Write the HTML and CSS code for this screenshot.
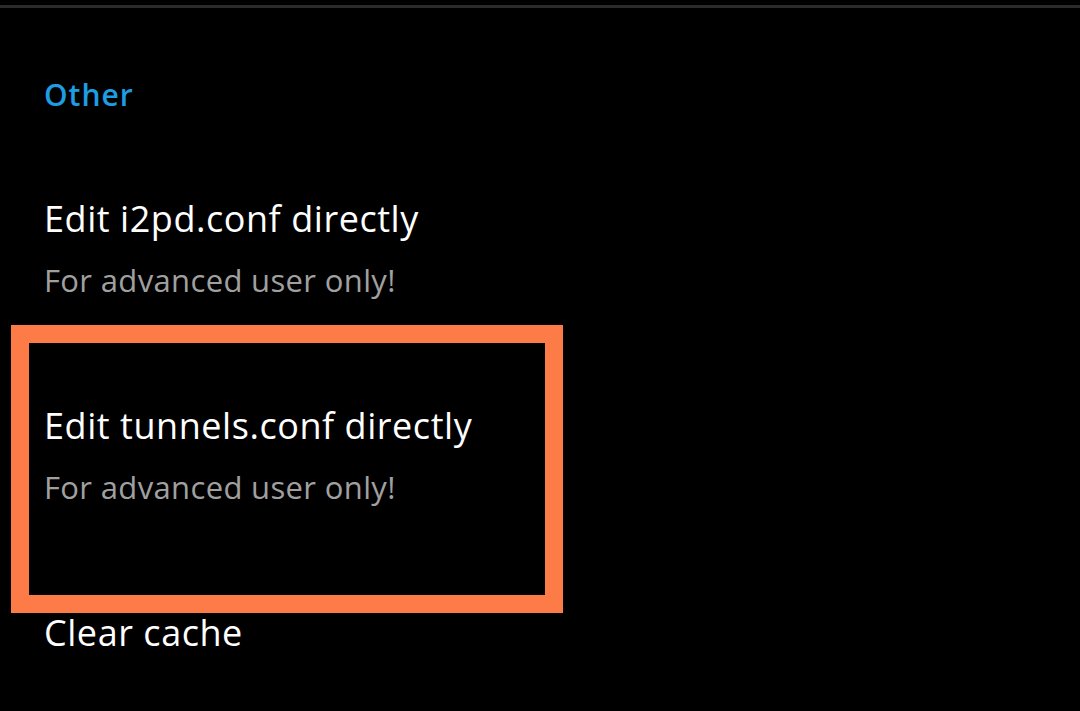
FILE: index.html
```html
<!DOCTYPE html>
<html>
<head>
<meta charset="utf-8">
<link rel="stylesheet" href="styles.css">
</head>
<body>
<div class="topline"></div>
<div class="list">
  <div class="header">Other</div>
  <div class="item">
    <div class="title">Edit i2pd.conf directly</div>
    <div class="sub">For advanced user only!</div>
  </div>
  <div class="item item-hl">
    <div class="title">Edit tunnels.conf directly</div>
    <div class="sub">For advanced user only!</div>
    <div class="highlight"></div>
  </div>
  <div class="item">
    <div class="title">Clear cache</div>
  </div>
</div>
</body>
</html>
```

FILE: styles.css
```css
html, body {
  margin: 0;
  padding: 0;
  background: #000;
  height: 711px;
  overflow: hidden;
}
body {
  font-family: "Open Sans", "Noto Sans", sans-serif;
}
.topline {
  margin-top: 5px;
  height: 3px;
  background: #2b2b2b;
}
.list {
  padding-left: 44px;
}
.header {
  margin-top: 67px;
  margin-bottom: 30px;
  font-size: 30px;
  line-height: 40px;
  font-weight: 600;
  letter-spacing: 1px;
  color: #1e9de3;
}
.item {
  position: relative;
  padding: 50px 0 51px;
}
.title {
  font-size: 36px;
  line-height: 48px;
  letter-spacing: 0.55px;
  color: #fff;
}
.sub {
  margin-top: 16px;
  font-size: 31px;
  line-height: 42px;
  letter-spacing: 0.35px;
  color: #a0a0a0;
}
.highlight {
  position: absolute;
  left: -33px;
  top: -27px;
  width: 516px;
  height: 252px;
  border: 18px solid #fd7b47;
}
```
